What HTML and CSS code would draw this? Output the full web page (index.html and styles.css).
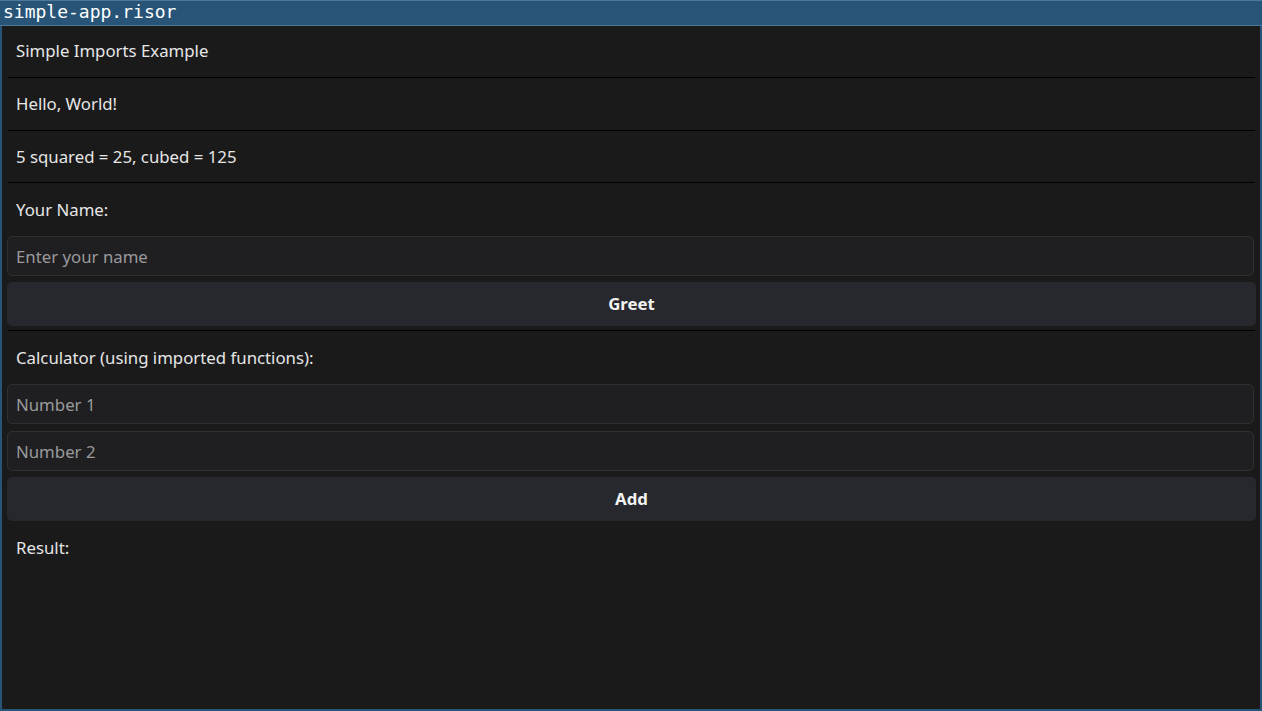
FILE: index.html
```html
<!DOCTYPE html>
<html>
<head>
<meta charset="utf-8">
<link rel="stylesheet" href="styles.css">
</head>
<body>
<div class="window">
  <div class="titlebar">simple-app.risor</div>
  <div class="content">
    <div class="row sep first">Simple Imports Example</div>
    <div class="row sep">Hello, World!</div>
    <div class="row sep last">5 squared = 25, cubed = 125</div>
    <div class="label">Your Name:</div>
    <input class="field" type="text" placeholder="Enter your name">
    <button class="btn">Greet</button>
    <div class="divider"></div>
    <div class="label">Calculator (using imported functions):</div>
    <input class="field" type="text" placeholder="Number 1">
    <input class="field wide-gap" type="text" placeholder="Number 2">
    <button class="btn">Add</button>
    <div class="label">Result:</div>
  </div>
</div>
</body>
</html>
```
FILE: styles.css
```css
* { box-sizing: border-box; }
html, body {
  margin: 0;
  padding: 0;
  width: 1262px;
  height: 711px;
  overflow: hidden;
  background: #285577;
}
.window {
  width: 1262px;
  height: 711px;
  display: flex;
  flex-direction: column;
  border: 2px solid #285577;
  border-top: none;
}
.titlebar {
  height: 26px;
  margin: 0 -2px;
  background: #285577;
  border-top: 1px solid #4c7899;
  border-bottom: 1px solid #4c7899;
  color: #ffffff;
  font-family: "DejaVu Sans Mono", monospace;
  font-size: 18px;
  line-height: 22px;
  padding-left: 3px;
}
.content {
  flex: 1;
  background: #1a1a1a;
  padding: 0 4px 0 5px;
  display: flex;
  flex-direction: column;
  font-family: "Noto Sans", sans-serif;
  font-size: 16.8px;
  color: #e6e6e6;
}
.row {
  padding: 15px 9px 15px;
  line-height: 22px;
}
.row.first { padding-top: 14px; }
.row.last { padding-bottom: 14px; }
.sep {
  border-bottom: 1px solid #000000;
  margin: 0 1px;
  padding-left: 8px;
}
.label {
  padding: 16px 9px 15px;
  line-height: 22px;
}
.field {
  height: 40px;
  margin: 0 2px 6px 0;
  background: #1f1f21;
  border: 1px solid #303033;
  border-radius: 5px;
  padding: 0 8px;
  font-family: "Noto Sans", sans-serif;
  font-size: 16.8px;
  color: #e6e6e6;
  outline: none;
}
.field::placeholder { color: #9a9a9c; }
.field.wide-gap { margin-top: 1px; }
.btn {
  height: 44px;
  padding: 0 0 2px;
  background: #27282d;
  border: none;
  border-radius: 5px;
  color: #f2f2f2;
  font-family: "Noto Sans", sans-serif;
  font-size: 16.8px;
  font-weight: bold;
}
.divider {
  height: 1px;
  margin: 4px 1px 0;
  background: #000000;
}
```
